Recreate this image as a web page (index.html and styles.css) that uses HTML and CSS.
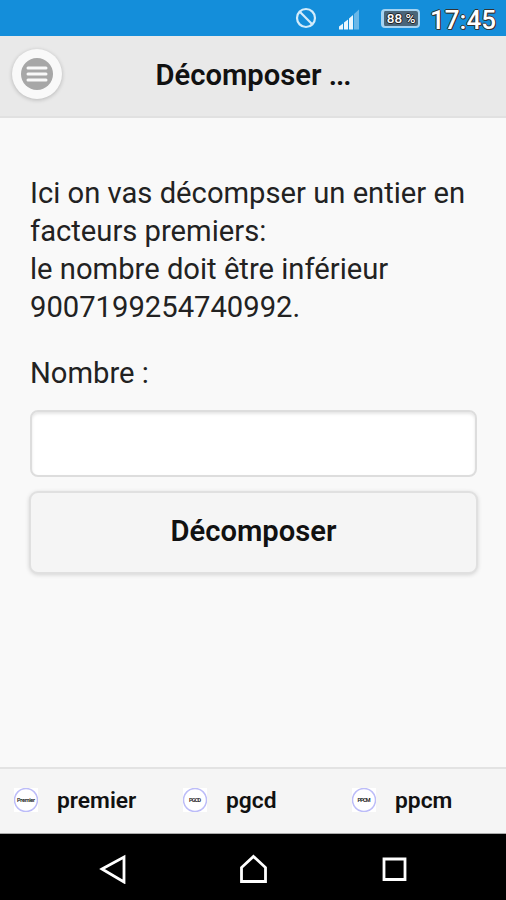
FILE: index.html
```html
<!DOCTYPE html>
<html lang="fr">
<head>
  <meta charset="UTF-8">
  <meta name="viewport" content="width=device-width,initial-scale=1">
  <title>Décomposer</title>
  <link rel="stylesheet" href="styles.css">
</head>
<body>
  <div class="phone">
    <div class="status">
      <svg class="mute" width="22" height="22" viewBox="0 0 22 22">
        <circle cx="11" cy="11" r="9"/>
        <path d="M4.800 4.800L17.200 17.200"/>
      </svg>
      <svg class="signal" width="21" height="21" viewBox="0 0 21 21">
        <path class="on" d="M0 20.500v-3l4-3v6zM5 20.500v-7l4-3v10zM10 20.500v-11l4-3.500v14.500z"/>
        <path class="off" d="M15 20.500V5l5-4.500v20z"/>
      </svg>
      <div class="battery"><span>88 %</span></div>
      <span class="clock">17:45</span>
    </div>
    <div class="header">
      <a class="menu" href="#">
        <svg width="32" height="32" viewBox="0 0 32 32">
          <circle cx="16" cy="16" r="16"/>
          <path d="M7 10h18M7 16h18M7 22h18"/>
        </svg>
      </a>
      <h1 class="title">Décomposer <span class="dots">...</span></h1>
    </div>
    <div class="content">
      <p class="intro">Ici on vas décompser un entier en<br>facteurs premiers:<br>le nombre doit être inférieur<br>9007199254740992.</p>
      <label class="label" for="nombre">Nombre :</label>
      <input class="field" id="nombre" type="text">
      <button class="btn" type="button">Décomposer</button>
    </div>
    <div class="footer">
      <a class="tab" href="#">
        <svg width="24" height="24" viewBox="0 0 24 24"><rect width="24" height="24"/><circle cx="12" cy="12" r="11.500"/><text x="12" y="14" textLength="18">Premier</text></svg>
        <span>premier</span>
      </a>
      <a class="tab" href="#">
        <svg width="24" height="24" viewBox="0 0 24 24"><rect width="24" height="24"/><circle cx="12" cy="12" r="11.500"/><text x="12" y="14" textLength="12">PGCD</text></svg>
        <span>pgcd</span>
      </a>
      <a class="tab" href="#">
        <svg width="24" height="24" viewBox="0 0 24 24"><rect width="24" height="24"/><circle cx="12" cy="12" r="11.500"/><text x="12" y="14" textLength="13">PPCM</text></svg>
        <span>ppcm</span>
      </a>
    </div>
    <div class="nav">
      <svg width="30" height="30" viewBox="0 0 30 30"><path d="M4 15L26 3v25z"/></svg>
      <svg width="30" height="30" viewBox="0 0 30 30"><path d="M2.500 27.500V13.500L14.500 2.500l12 11v14z"/></svg>
      <svg width="30" height="30" viewBox="0 0 30 30"><path d="M5 5h21v20.500H5z"/></svg>
    </div>
  </div>
</body>
</html>
```

FILE: styles.css
```css
body{
  margin:0;
  font-family:Roboto,"Noto Sans",sans-serif;
  color:#111;
}
a{
  color:inherit;
  text-decoration:none;
}
.phone{
  width:506px;
  height:900px;
  display:flex;
  flex-direction:column;
  background:#f9f9f9;
  overflow:hidden;
}
/* status bar */
.status{
  height:36px;
  box-sizing:border-box;
  padding-right:10px;
  display:flex;
  align-items:center;
  justify-content:flex-end;
  background:#148eda;
  color:#fff;
}
.mute{
  fill:none;
  stroke:#d3ecfb;
  stroke-width:2.2;
  margin-right:22px;
}
.signal{
  margin:2px 21px 0 0;
}
.signal .on{
  fill:#eaf6fd;
}
.signal .off{
  fill:#69b7e8;
}
.battery{
  width:39px;
  height:19px;
  box-sizing:border-box;
  margin-right:10px;
  border:2px solid #a5d3f1;
  border-left-width:3px;
  border-radius:4px;
  background:#4a667a;
  display:flex;
  align-items:center;
  justify-content:center;
  font-size:13.5px;
  font-weight:500;
  white-space:nowrap;
  text-shadow:1px 0 #222,-1px 0 #222,0 1px #222,0 -1px #222;
}
.clock{
  font-size:26px;
  font-weight:500;
  line-height:36px;
  padding-top:3px;
  text-shadow:1px 0 #333,-1px 0 #333,0 1px #333,0 -1px #333,1px 1px #333;
}
/* header */
.header{
  height:82px;
  box-sizing:border-box;
  padding:0 12px;
  display:flex;
  align-items:center;
  background:#e9e9e9;
  border-bottom:2px solid #e1e1e1;
}
.menu{
  width:50px;
  height:50px;
  margin-top:-4px;
  border-radius:50%;
  background:#f9f9f9;
  box-shadow:0 1px 4px rgba(0,0,0,.22);
  display:flex;
  align-items:center;
  justify-content:center;
}
.menu circle{
  fill:#a7a7a7;
}
.menu path{
  stroke:#f9f9f9;
  stroke-width:3;
  stroke-linecap:round;
}
.title{
  flex:1;
  margin:0 50px 2px 0;
  font-size:29.2px;
  font-weight:600;
  line-height:36px;
  text-align:center;
}
.dots{
  letter-spacing:-1px;
}
/* content */
.content{
  flex:1;
  padding:56px 29px 0;
}
.intro{
  margin:0 0 28px 1px;
  color:#222;
  font-size:29.2px;
  line-height:38px;
  white-space:nowrap;
}
.label{
  display:block;
  margin:0 0 18px 1px;
  color:#222;
  font-size:29.2px;
  line-height:38px;
}
.field{
  display:block;
  width:447px;
  height:67px;
  box-sizing:border-box;
  margin:0 0 14px 1px;
  padding:0 10px;
  border:2px solid #ddd;
  border-radius:8px;
  background:#fff;
  box-shadow:inset 0 2px 3px rgba(0,0,0,.1);
  font:inherit;
  font-size:29px;
}
.btn{
  display:block;
  width:449px;
  height:83px;
  padding:0 0 4px;
  border:2px solid #e0e0e0;
  border-radius:9px;
  background:#f5f5f5;
  box-shadow:0 1px 4px rgba(0,0,0,.15);
  color:#111;
  font-family:inherit;
  font-size:29.2px;
  font-weight:600;
}
/* footer */
.footer{
  height:67px;
  box-sizing:border-box;
  border-top:2px solid #e3e3e3;
  border-bottom:1px solid #aaa;
  display:grid;
  grid-template-columns:169px 169px 168px;
  background:#f5f5f5;
}
.tab{
  display:flex;
  align-items:center;
  padding:0 0 2px 14px;
  font-size:22.8px;
  font-weight:600;
}
.tab svg{
  margin-right:19px;
  overflow:hidden;
}
.tab rect{
  fill:#fff;
}
.tab circle{
  fill:#fff;
  stroke:#bcbcf8;
  stroke-width:1.5;
}
.tab text{
  font-size:5.5px;
  text-anchor:middle;
  fill:#111;
}
/* android nav bar */
.nav{
  height:66px;
  box-sizing:border-box;
  padding:4px 97px 0 98px;
  display:flex;
  align-items:center;
  justify-content:space-between;
  background:#000;
}
.nav path{
  fill:none;
  stroke:#fff;
  stroke-width:2.8;
}
```
